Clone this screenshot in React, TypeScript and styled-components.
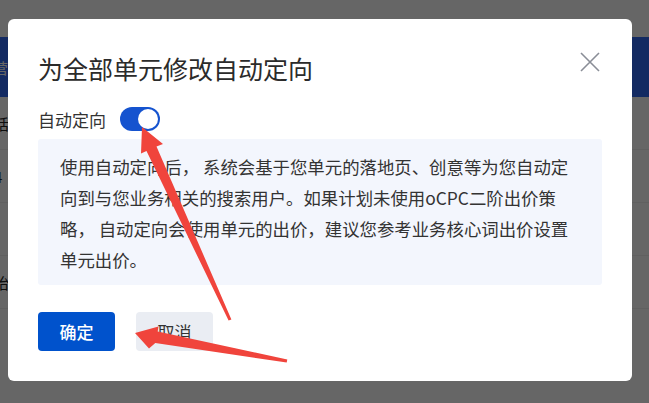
import React, { useState } from 'react'
import styled, { createGlobalStyle } from 'styled-components'

const GlobalStyle = createGlobalStyle`
  html, body {
    margin: 0;
    padding: 0;
  }
  body {
    font-family: 'Noto Sans CJK SC', 'Noto Sans', sans-serif;
    color: #333;
  }
`

const NOTICE =
  '使用自动定向后， 系统会基于您单元的落地页、创意等为您自动定向到与您业务相关的搜索用户。如果计划未使用oCPC二阶出价策略， 自动定向会使用单元的出价，建议您参考业务核心词出价设置单元出价。'

const App: React.FC = () => {
  const [autoTarget, setAutoTarget] = useState(true)

  return (
    <Screen>
      <GlobalStyle />
      <BehindPage>
        <NavBand>
          <NavText>营</NavText>
        </NavBand>
        <BehindRow>话</BehindRow>
        <BehindRow>4</BehindRow>
        <BehindRow />
        <BehindRow>抬</BehindRow>
      </BehindPage>

      <Overlay>
        <Modal>
          <Header>
            <Title>为全部单元修改自动定向</Title>
            <CloseButton aria-label="关闭">
              <svg width="20" height="20" viewBox="0 0 20 20">
                <path d="M1 1 L19 19 M19 1 L1 19" stroke="#8a8e97" strokeWidth="1.6" fill="none" />
              </svg>
            </CloseButton>
          </Header>

          <SwitchRow>
            <Label>自动定向</Label>
            <Toggle $on={autoTarget} onClick={() => setAutoTarget(!autoTarget)}>
              <Knob />
            </Toggle>
          </SwitchRow>

          <Notice>{NOTICE}</Notice>

          <Footer>
            <Button $primary>确定</Button>
            <Button>取消</Button>
          </Footer>
        </Modal>
      </Overlay>

      <Annotations width="649" height="403" viewBox="0 0 649 403">
        <polygon
          fill="#f0443c"
          points="142,127 163,144 156.5,146.5 231.4,319.6 228.6,320.6 146.5,151 141,153.5"
        />
        <polygon
          fill="#f0443c"
          points="135,333 158.5,326.5 157.7,331.5 287.3,359.5 286.7,362.5 155.3,343 149,348.5"
        />
      </Annotations>
    </Screen>
  )
}

const Screen = styled.div`
  position: relative;
  width: 649px;
  height: 403px;
  overflow: hidden;
  background: #ffffff;
`

const BehindPage = styled.div`
  display: flex;
  flex-direction: column;
  padding-top: 37px;
`

const NavBand = styled.div`
  height: 60px;
  background: #3069f5;
  display: flex;
  align-items: center;
`

const NavText = styled.span`
  margin-left: -7px;
  color: #ffffff;
  font-size: 15px;
`

const BehindRow = styled.div`
  height: 52px;
  display: flex;
  align-items: center;
  margin-left: -6px;
  font-size: 15px;
  color: #222;
  border-bottom: 1px solid #f0f0f0;
`

const Overlay = styled.div`
  position: absolute;
  inset: 0;
  background: rgba(0, 0, 0, 0.6);
  display: flex;
  align-items: flex-start;
  padding: 19px 0 0 8px;
`

const Modal = styled.div`
  width: 624px;
  box-sizing: border-box;
  background: #ffffff;
  border-radius: 6px;
  padding: 33px 30px 30px;
  display: flex;
  flex-direction: column;
`

const Header = styled.div`
  display: flex;
  justify-content: space-between;
  align-items: flex-start;
`

const Title = styled.div`
  font-size: 25px;
  line-height: 32px;
  color: #2b2b2b;
`

const CloseButton = styled.button`
  width: 20px;
  height: 20px;
  padding: 0;
  margin-right: 2px;
  border: none;
  background: none;
  cursor: pointer;
  display: flex;
`

const SwitchRow = styled.div`
  margin-top: 23px;
  display: flex;
  align-items: center;
  gap: 14px;
  height: 24px;
`

const Label = styled.span`
  font-size: 17px;
  color: #333;
`

const Toggle = styled.div<{ $on: boolean }>`
  width: 40px;
  height: 24px;
  border-radius: 12px;
  background: ${(p) => (p.$on ? '#1553cf' : '#c5c8d0')};
  display: flex;
  align-items: center;
  justify-content: ${(p) => (p.$on ? 'flex-end' : 'flex-start')};
  padding: 0 2px;
  box-sizing: border-box;
  cursor: pointer;
`

const Knob = styled.span`
  width: 20px;
  height: 20px;
  border-radius: 50%;
  background: #ffffff;
`

const Notice = styled.div`
  margin-top: 8px;
  background: #f3f6fd;
  border-radius: 3px;
  padding: 12px 20px 10px 22px;
  font-size: 17.4px;
  line-height: 31px;
  color: #333;
`

const Footer = styled.div`
  margin-top: 27px;
  display: flex;
  gap: 21px;
`

const Button = styled.button<{ $primary?: boolean }>`
  width: 77px;
  height: 39px;
  border: none;
  border-radius: 4px;
  font-family: inherit;
  font-size: 17px;
  font-weight: ${(p) => (p.$primary ? 500 : 400)};
  background: ${(p) => (p.$primary ? '#0052cc' : '#eaedf3')};
  color: ${(p) => (p.$primary ? '#ffffff' : '#333333')};
  cursor: pointer;
`

const Annotations = styled.svg`
  position: absolute;
  left: 0;
  top: 0;
  pointer-events: none;
`

export default App
